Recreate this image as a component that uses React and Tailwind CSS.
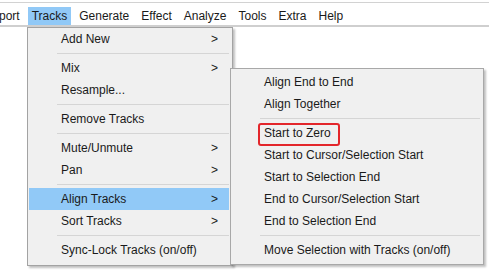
import React from "react";

const menuBar = ["port", "Tracks", "Generate", "Effect", "Analyze", "Tools", "Extra", "Help"];

const tracksMenu = [
  { label: "Add New", sub: true },
  { sep: true },
  { label: "Mix", sub: true },
  { label: "Resample..." },
  { sep: true },
  { label: "Remove Tracks" },
  { sep: true },
  { label: "Mute/Unmute", sub: true },
  { label: "Pan", sub: true },
  { sep: true },
  { label: "Align Tracks", sub: true, active: true },
  { label: "Sort Tracks", sub: true },
  { sep: true },
  { label: "Sync-Lock Tracks (on/off)" },
];

const alignMenu = [
  { label: "Align End to End" },
  { label: "Align Together" },
  { sep: true },
  { label: "Start to Zero", marked: true },
  { label: "Start to Cursor/Selection Start" },
  { label: "Start to Selection End" },
  { label: "End to Cursor/Selection Start" },
  { label: "End to Selection End" },
  { sep: true },
  { label: "Move Selection with Tracks (on/off)" },
];

const MenuItems = ({ items }) => (
  <>
    {items.map((item, i) =>
      item.sep ? (
        <div key={i} className="h-[7px] flex items-center ml-[29px] mr-[3px]">
          <div className="w-full h-px bg-[#d5d5d5]" />
        </div>
      ) : (
        <div
          key={i}
          className={
            "relative h-[22px] ml-[1px] mr-[3px] pl-[32px] pr-[11px] flex items-center justify-between " +
            (item.active ? "bg-[#91c9f7]" : "")
          }
        >
          <span>{item.label}</span>
          {item.sub && <span>&gt;</span>}
          {item.marked && (
            <div className="absolute left-[26px] top-[1px] w-[82px] h-[23px] border-2 border-[#e3262b] rounded-[3px]" />
          )}
        </div>
      )
    )}
  </>
);

export default function App() {
  return (
    <div
      className="relative w-[489px] h-[270px] bg-white overflow-hidden text-[12px] text-[#1a1a1a]"
      style={{ fontFamily: '"Liberation Sans", Arial, sans-serif' }}
    >
      {/* menu bar */}
      <div className="mt-[2px] border-t border-[#d2d2d2] pt-[4px] border-b-2 border-b-[#cfcfcf] bg-white">
        <div className="flex gap-[4px] ml-[-5px] h-[18px]">
          {menuBar.map((m) => (
            <div
              key={m}
              className={"px-[4px] flex items-center " + (m === "Tracks" ? "bg-[#91c9f7]" : "")}
            >
              {m}
            </div>
          ))}
        </div>
      </div>

      {/* Tracks dropdown */}
      <div className="absolute left-[27px] top-[27px] w-[206px] bg-[#f0f0f0] border border-[#a3a3a3] pt-0 pb-[4px] shadow-[2px_2px_2px_rgba(0,0,0,0.25)]">
        <MenuItems items={tracksMenu} />
      </div>

      {/* Align Tracks submenu */}
      <div className="absolute left-[230px] top-[68px] w-[254px] bg-[#f0f0f0] border border-[#a8a8a8] pt-[2px] pb-[3px] shadow-[2px_2px_2px_rgba(0,0,0,0.25)]">
        <MenuItems items={alignMenu} />
      </div>
    </div>
  );
}
